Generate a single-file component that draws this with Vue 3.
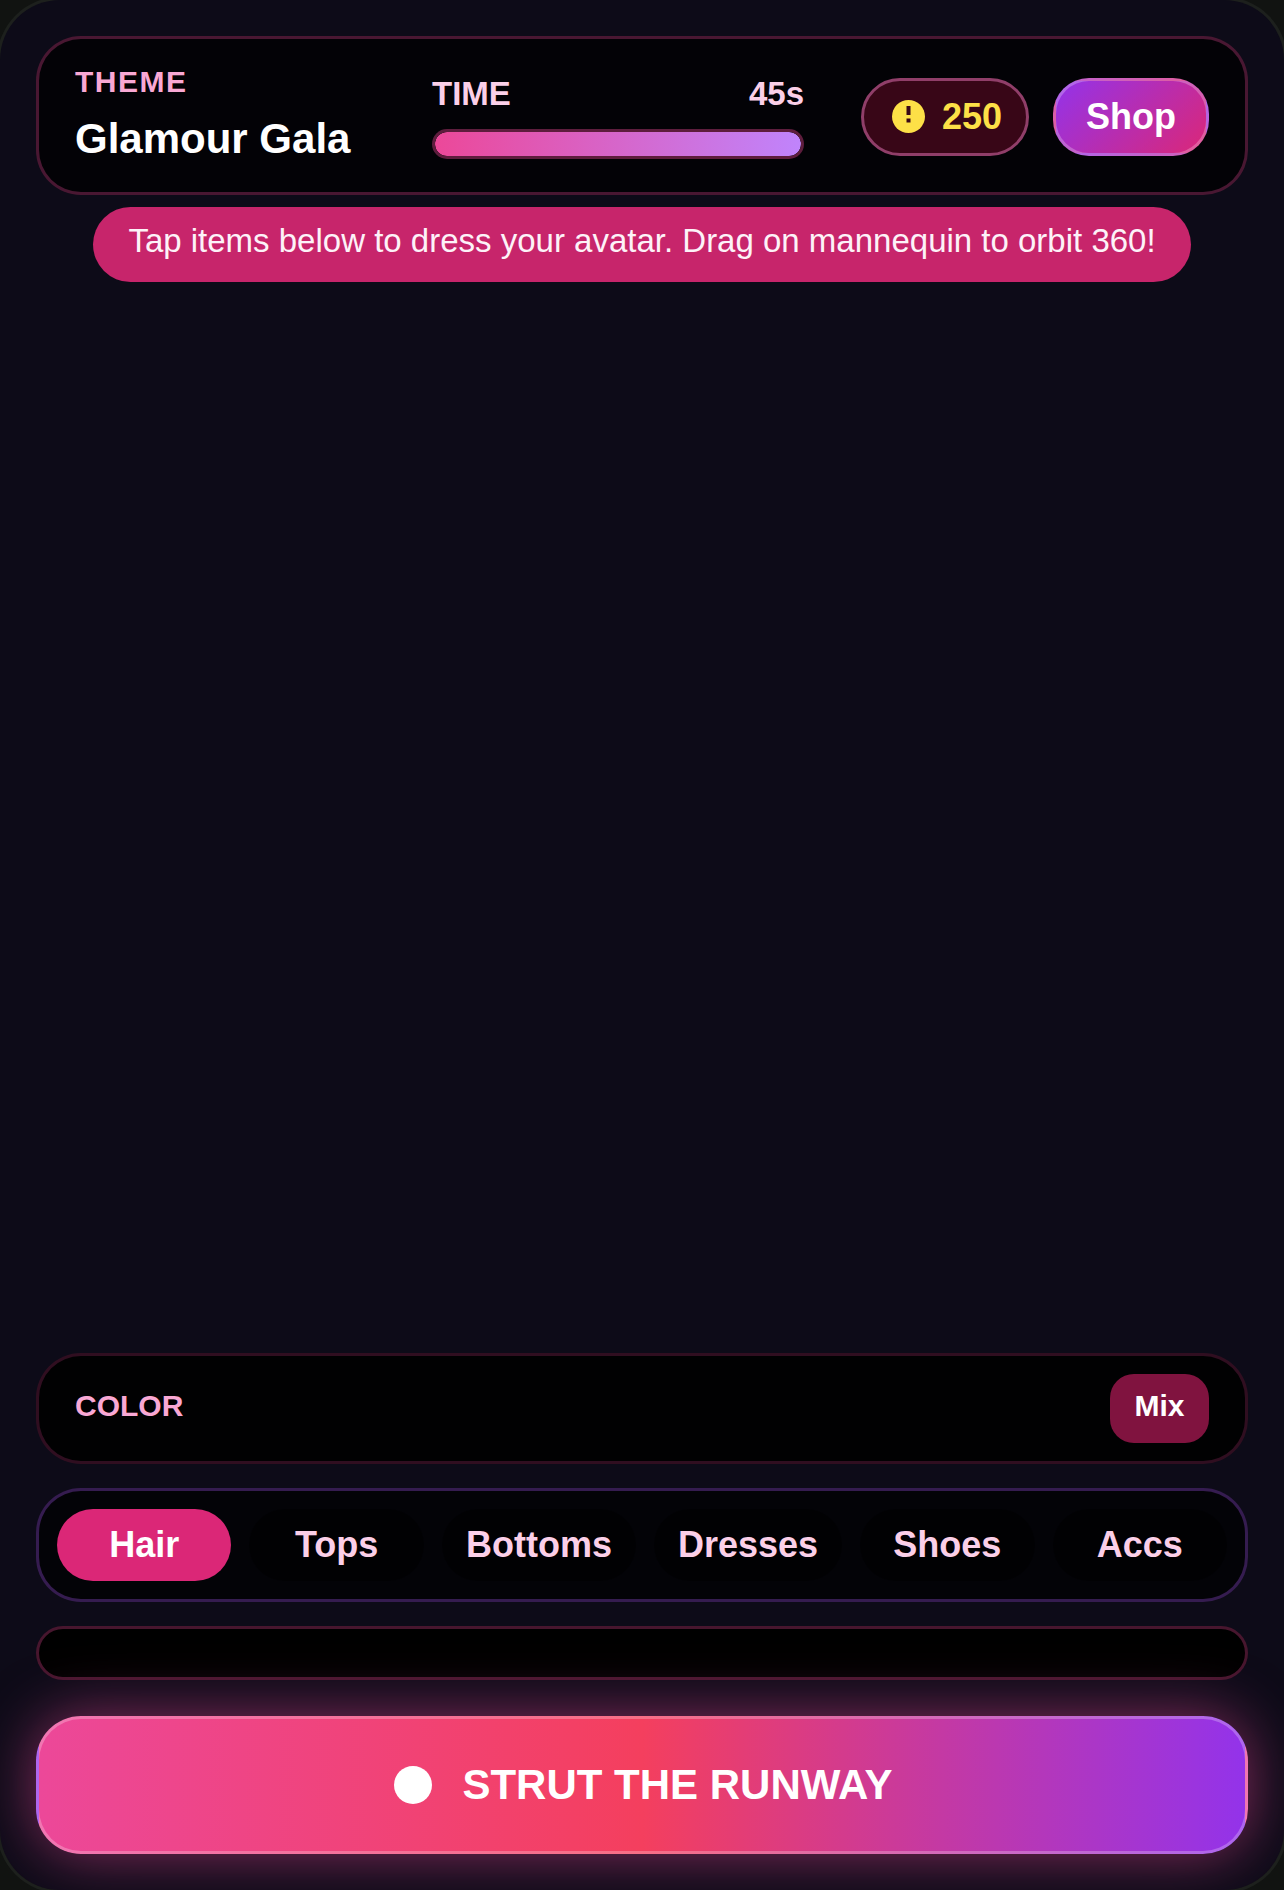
<script setup>
const tabs = ['Hair', 'Tops', 'Bottoms', 'Dresses', 'Shoes', 'Accs']
</script>

<template>
  <div class="frame">
    <div class="screen">
      <header class="hud">
        <div class="theme">
          <div class="theme-label">THEME</div>
          <div class="theme-name">Glamour Gala</div>
        </div>
        <div class="timer">
          <div class="timer-row"><span>TIME</span><span>45s</span></div>
          <div class="track"><div class="fill"></div></div>
        </div>
        <div class="coins">
          <svg class="coin" viewBox="0 0 33 33" width="33" height="33">
            <circle cx="16.5" cy="16.5" r="16.5" fill="#fde047" />
            <rect x="14.5" y="6" width="4" height="9" fill="#380617" />
            <rect x="14.5" y="18.5" width="4" height="4" fill="#380617" />
          </svg>
          <span>250</span>
        </div>
        <button class="shop">Shop</button>
      </header>

      <div class="hint-wrap">
        <div class="hint">Tap items below to dress your avatar. Drag on mannequin to orbit 360!</div>
      </div>

      <div class="stage"></div>

      <section class="color">
        <div class="color-label">COLOR</div>
        <button class="mix">Mix</button>
      </section>

      <nav class="tabs">
        <button v-for="(t, i) in tabs" :key="t" class="tab" :class="{ active: i === 0 }">{{ t }}</button>
      </nav>

      <div class="items"></div>

      <button class="cta">
        <span class="dot"></span>
        <span>STRUT THE RUNWAY</span>
      </button>
    </div>
  </div>
</template>

<style>
html, body { margin: 0; background: #111311; }
</style>

<style scoped>
* { box-sizing: border-box; }
button { font-family: inherit; cursor: pointer; }
.frame {
  width: 1284px;
  height: 1890px;
  overflow: hidden;
  background: #111311;
  font-family: "Liberation Sans", Arial, sans-serif;
}
.screen {
  width: 1284px;
  height: 1890px;
  border-radius: 60px;
  background: #0d0b18;
  box-shadow: 0 0 0 3px #1d201d;
  padding: 36px;
  display: flex;
  flex-direction: column;
  overflow: hidden;
}
.hud {
  height: 159px;
  flex: none;
  display: flex;
  align-items: center;
  gap: 24px;
  padding: 2px 36px 0;
  border: 3px solid rgba(236, 72, 153, 0.3);
  border-radius: 45px;
  background: rgba(0, 0, 0, 0.75);
}
.theme { width: 333px; flex: none; margin-bottom: 6px; }
.theme-label { font-size: 30px; line-height: 36px; font-weight: 700; letter-spacing: 1.5px; color: #f9a8d4; }
.theme-name { margin-top: 15px; font-size: 42px; line-height: 48px; font-weight: 700; color: #fff; }
.timer { width: 372px; flex: none; margin-right: 33px; }
.timer-row { display: flex; justify-content: space-between; font-size: 33px; line-height: 39px; font-weight: 700; color: #fbcfe8; }
.track {
  margin-top: 16px;
  height: 30px;
  border: 3px solid rgba(236, 72, 153, 0.4);
  border-radius: 15px;
  background: #000;
  overflow: hidden;
}
.fill { height: 100%; width: 100%; border-radius: 12px; background: linear-gradient(90deg, #ec4899, #c084fc); }
.coins {
  width: 168px;
  height: 78px;
  flex: none;
  display: flex;
  align-items: center;
  gap: 17px;
  padding-left: 28px;
  border: 3px solid #903e69;
  border-radius: 39px;
  background: #380617;
  color: #fde047;
  font-size: 36px;
  font-weight: 700;
}
.coin { flex: none; }
.shop {
  width: 156px;
  height: 78px;
  flex: none;
  border: 3px solid rgba(255, 255, 255, 0.25);
  border-radius: 36px;
  background: linear-gradient(135deg, #9333ea, #db2777);
  color: #fff;
  font-size: 36px;
  font-weight: 700;
  padding: 0;
}
.hint-wrap { margin-top: 12px; display: flex; justify-content: center; flex: none; }
.hint {
  height: 75px;
  padding: 16px 35px 0;
  border-radius: 37.5px;
  background: #c7256b;
  color: #fdf2f8;
  font-size: 33px;
  line-height: 36px;
}
.stage { flex: 1; }
.color {
  height: 111px;
  flex: none;
  display: flex;
  justify-content: space-between;
  padding: 18px 36px 0;
  border: 3px solid rgba(236, 72, 153, 0.2);
  border-radius: 45px;
  background: rgba(0, 0, 0, 0.9);
}
.color-label { font-size: 30px; line-height: 36px; margin-top: 14px; font-weight: 700; color: #f9a8d4; }
.mix {
  width: 99px;
  height: 69px;
  border: 0;
  border-radius: 24px;
  background: #80133f;
  color: #fff;
  font-size: 30px;
  font-weight: 700;
  padding: 0 0 5px;
}
.tabs {
  margin-top: 24px;
  height: 114px;
  flex: none;
  display: flex;
  align-items: center;
  gap: 18px;
  padding: 0 18px;
  border: 3px solid rgba(168, 85, 247, 0.3);
  border-radius: 45px;
  background: rgba(0, 0, 0, 0.7);
}
.tab {
  flex: 1 1 0;
  height: 72px;
  border: 0;
  border-radius: 36px;
  background: rgba(0, 0, 0, 0.5);
  color: #fbcfe8;
  font-size: 36px;
  font-weight: 700;
  padding: 0 24px;
}
.tab.active { background: #db2777; color: #fff; }
.items {
  margin-top: 24px;
  height: 54px;
  flex: none;
  border: 3px solid rgba(236, 72, 153, 0.3);
  border-radius: 27px;
  background: #000;
}
.cta {
  margin-top: 36px;
  height: 138px;
  flex: none;
  display: flex;
  align-items: center;
  justify-content: center;
  gap: 30px;
  border: 3px solid rgba(255, 255, 255, 0.25);
  border-radius: 45px;
  background: linear-gradient(90deg, #ec4899, #f43f5e 50%, #9333ea);
  box-shadow: 0 0 60px rgba(236, 72, 153, 0.55);
  color: #fff;
  font-size: 42px;
  font-weight: 700;
  padding: 0 0 0 3px;
}
.dot { width: 38px; height: 38px; border-radius: 50%; background: #fff; }
</style>
